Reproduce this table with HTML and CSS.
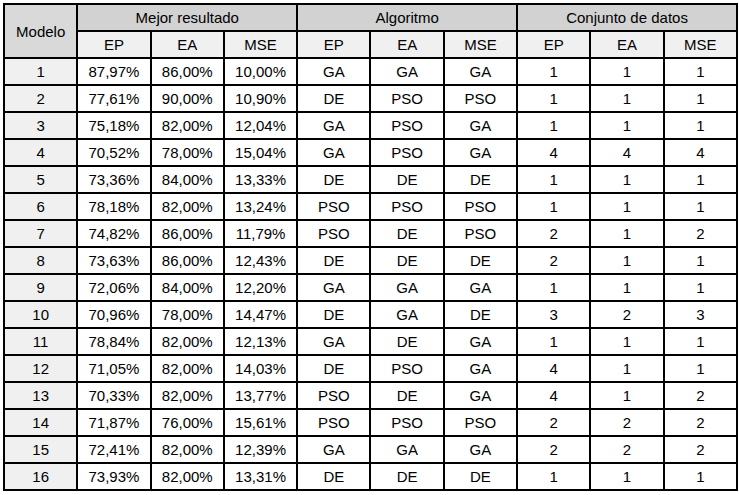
FILE: index.html
```html
<!DOCTYPE html>
<html lang="es">
<head>
<meta charset="utf-8">
<link rel="stylesheet" href="styles.css">
</head>
<body>
<table class="results">
  <colgroup>
    <col><col><col><col><col><col><col><col><col><col>
  </colgroup>
  <thead>
    <tr class="h1">
      <th rowspan="2" class="model-h">Modelo</th>
      <th colspan="3">Mejor resultado</th>
      <th colspan="3">Algoritmo</th>
      <th colspan="3">Conjunto de datos</th>
    </tr>
    <tr class="h2">
      <th>EP</th><th>EA</th><th>MSE</th>
      <th>EP</th><th>EA</th><th>MSE</th>
      <th>EP</th><th>EA</th><th>MSE</th>
    </tr>
  </thead>
  <tbody>
    <tr><td class="m">1</td><td>87,97%</td><td>86,00%</td><td>10,00%</td><td>GA</td><td>GA</td><td>GA</td><td>1</td><td>1</td><td>1</td></tr>
    <tr><td class="m">2</td><td>77,61%</td><td>90,00%</td><td>10,90%</td><td>DE</td><td>PSO</td><td>PSO</td><td>1</td><td>1</td><td>1</td></tr>
    <tr><td class="m">3</td><td>75,18%</td><td>82,00%</td><td>12,04%</td><td>GA</td><td>PSO</td><td>GA</td><td>1</td><td>1</td><td>1</td></tr>
    <tr><td class="m">4</td><td>70,52%</td><td>78,00%</td><td>15,04%</td><td>GA</td><td>PSO</td><td>GA</td><td>4</td><td>4</td><td>4</td></tr>
    <tr><td class="m">5</td><td>73,36%</td><td>84,00%</td><td>13,33%</td><td>DE</td><td>DE</td><td>DE</td><td>1</td><td>1</td><td>1</td></tr>
    <tr><td class="m">6</td><td>78,18%</td><td>82,00%</td><td>13,24%</td><td>PSO</td><td>PSO</td><td>PSO</td><td>1</td><td>1</td><td>1</td></tr>
    <tr><td class="m">7</td><td>74,82%</td><td>86,00%</td><td>11,79%</td><td>PSO</td><td>DE</td><td>PSO</td><td>2</td><td>1</td><td>2</td></tr>
    <tr><td class="m">8</td><td>73,63%</td><td>86,00%</td><td>12,43%</td><td>DE</td><td>DE</td><td>DE</td><td>2</td><td>1</td><td>1</td></tr>
    <tr><td class="m">9</td><td>72,06%</td><td>84,00%</td><td>12,20%</td><td>GA</td><td>GA</td><td>GA</td><td>1</td><td>1</td><td>1</td></tr>
    <tr><td class="m">10</td><td>70,96%</td><td>78,00%</td><td>14,47%</td><td>DE</td><td>GA</td><td>DE</td><td>3</td><td>2</td><td>3</td></tr>
    <tr><td class="m">11</td><td>78,84%</td><td>82,00%</td><td>12,13%</td><td>GA</td><td>DE</td><td>GA</td><td>1</td><td>1</td><td>1</td></tr>
    <tr><td class="m">12</td><td>71,05%</td><td>82,00%</td><td>14,03%</td><td>DE</td><td>PSO</td><td>GA</td><td>4</td><td>1</td><td>1</td></tr>
    <tr><td class="m">13</td><td>70,33%</td><td>82,00%</td><td>13,77%</td><td>PSO</td><td>DE</td><td>GA</td><td>4</td><td>1</td><td>2</td></tr>
    <tr><td class="m">14</td><td>71,87%</td><td>76,00%</td><td>15,61%</td><td>PSO</td><td>PSO</td><td>PSO</td><td>2</td><td>2</td><td>2</td></tr>
    <tr><td class="m">15</td><td>72,41%</td><td>82,00%</td><td>12,39%</td><td>GA</td><td>GA</td><td>GA</td><td>2</td><td>2</td><td>2</td></tr>
    <tr><td class="m">16</td><td>73,93%</td><td>82,00%</td><td>13,31%</td><td>DE</td><td>DE</td><td>DE</td><td>1</td><td>1</td><td>1</td></tr>
  </tbody>
</table>
</body>
</html>
```
FILE: styles.css
```css
html, body {
  margin: 0;
  padding: 0;
  background: #ffffff;
}
body {
  padding: 3px 0 0 3px;
}
.results {
  border-collapse: collapse;
  table-layout: fixed;
  width: 735px;
  font-family: "Liberation Sans", Arial, sans-serif;
  font-size: 15px;
  color: #000000;
}
.results th,
.results td {
  border: 2px solid #000000;
  text-align: center;
  vertical-align: middle;
  padding: 0;
  height: 25px;
  font-weight: normal;
  line-height: 17px;
}
.results .h1 th {
  background: #d2d2d2;
}
.results .h1 th.model-h {
  background: #d9d9d9;
}
.results .h2 th {
  background: #f0f0f0;
}
.results td.m {
  background: #f0f0f0;
}
.results td {
  background: #ffffff;
}
```
